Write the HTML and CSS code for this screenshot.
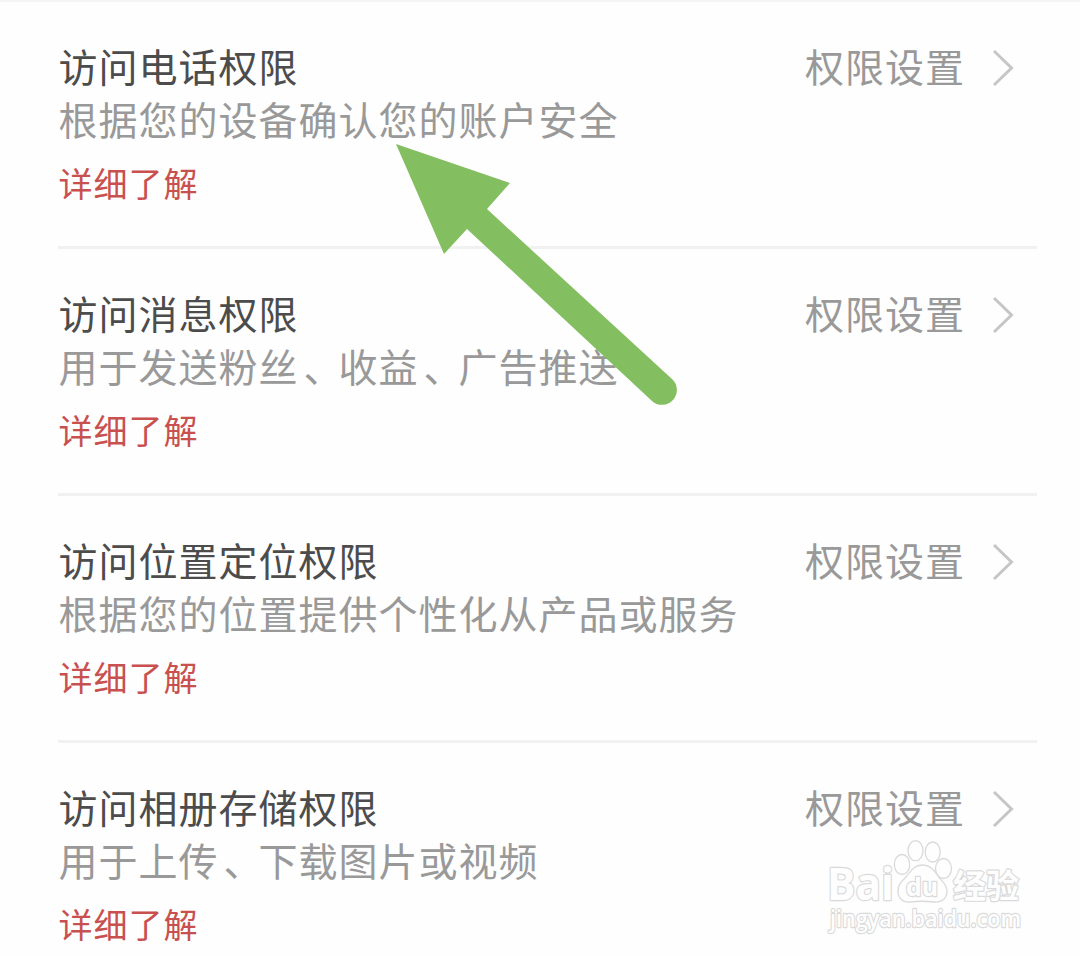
FILE: index.html
```html
<!DOCTYPE html>
<html lang="zh-CN">
<head>
    <meta charset="UTF-8">
    <meta name="viewport" content="width=device-width, initial-scale=1.0">
    <title>权限设置</title>
    <link rel="stylesheet" href="styles.css">
</head>
<body>

<div class="list">
    <div class="item">
        <div class="info">
            <div class="title">访问电话权限</div>
            <div class="desc">根据您的设备确认您的账户安全</div>
            <a class="more">详细了解</a>
        </div>
        <div class="setting">
            <span>权限设置</span>
            <svg class="chevron" viewBox="0 0 24 40"><path d="M3 3L20.5 20L3 37"/></svg>
        </div>
    </div>
    <div class="item">
        <div class="info">
            <div class="title">访问消息权限</div>
            <div class="desc">用于发送粉丝<span class="comma">、</span>收益<span class="comma">、</span>广告推送</div>
            <a class="more">详细了解</a>
        </div>
        <div class="setting">
            <span>权限设置</span>
            <svg class="chevron" viewBox="0 0 24 40"><path d="M3 3L20.5 20L3 37"/></svg>
        </div>
    </div>
    <div class="item">
        <div class="info">
            <div class="title">访问位置定位权限</div>
            <div class="desc">根据您的位置提供个性化从产品或服务</div>
            <a class="more">详细了解</a>
        </div>
        <div class="setting">
            <span>权限设置</span>
            <svg class="chevron" viewBox="0 0 24 40"><path d="M3 3L20.5 20L3 37"/></svg>
        </div>
    </div>
    <div class="item">
        <div class="info">
            <div class="title">访问相册存储权限</div>
            <div class="desc">用于上传<span class="comma">、</span>下载图片或视频</div>
            <a class="more">详细了解</a>
        </div>
        <div class="setting">
            <span>权限设置</span>
            <svg class="chevron" viewBox="0 0 24 40"><path d="M3 3L20.5 20L3 37"/></svg>
        </div>
    </div>
</div>

<!-- arrow over the list -->
<svg class="arrow" viewBox="0 0 290 270">
    <path d="M6 5L120 44L97 70L282 240A14.3 14.3 0 0 1 262 262L77 90L54 115Z"/>
</svg>

<!-- watermark -->
<svg class="watermark" viewBox="0 0 210 110">
    <g class="wm-paw">
        <ellipse cx="82" cy="31.5" rx="7.7" ry="10"/>
        <ellipse cx="95.5" cy="17.7" rx="7.5" ry="10"/>
        <ellipse cx="112.7" cy="19" rx="7.5" ry="10"/>
        <ellipse cx="123.5" cy="35.5" rx="8" ry="10"/>
        <path d="M102 32C94 32 91 38 86 44C81 49 78 52 78 58C78 65 83 70 90 69C98 68 106 68 114 69C122 70 127 65 127 58C127 51 122 49 118 43C114 37 110 32 102 32Z"/>
    </g>
    <text class="wm-logo" x="7" y="67" textLength="67" lengthAdjust="spacingAndGlyphs">Bai</text>
    <text class="wm-du" x="86" y="63" textLength="32" lengthAdjust="spacingAndGlyphs">du</text>
    <text class="wm-cn" x="133" y="65" textLength="66" lengthAdjust="spacingAndGlyphs">经验</text>
    <text class="wm-url" x="10" y="94" textLength="191" lengthAdjust="spacingAndGlyphs">jingyan.baidu.com</text>
</svg>

</body>
</html>
```
FILE: styles.css
```css
body {
    margin: 0;
    height: 956px;
    overflow: hidden;
    position: relative;
    box-sizing: border-box;
    border-top: 2px solid #f5f5f5;
    background-color: #fefefe;
    font-family: "Noto Sans CJK SC", sans-serif;
}

/* Permission list */
.list {
    margin: 0 43px 0 58px;
}

.item {
    display: flex;
    justify-content: space-between;
    height: 247px;
    box-sizing: border-box;
    padding: 37px 22px 0 0.5px;
    border-bottom: 3px solid #f1f1f1;
}

.item:last-child {
    border-bottom: none;
}

.title,
.desc,
.setting {
    font-size: 39px;
    letter-spacing: 1px;
    line-height: 53px;
    white-space: nowrap;
}

.title {
    color: #4c4c4c;
}

.desc {
    color: #999;
}

.comma {
    margin: 0 -5px 0 5px;
}

.more {
    display: block;
    margin-top: 14px;
    font-size: 34px;
    letter-spacing: 1px;
    line-height: 48px;
    color: #c8504f;
}

.setting {
    display: flex;
    align-items: center;
    height: 53px;
    color: #999;
}

.chevron {
    width: 24px;
    height: 40px;
    margin: 4px 0 0 26px;
    fill: none;
    stroke: #c6c6c6;
    stroke-width: 3;
}

/* Arrow */
.arrow {
    position: absolute;
    left: 390px;
    top: 137px;
    width: 290px;
    height: 270px;
    fill: #83bf60;
}

/* Watermark */
.watermark {
    position: absolute;
    left: 820px;
    top: 831px;
    width: 210px;
    height: 110px;
    overflow: visible;
    fill: #fefefe;
    stroke: #dadada;
    stroke-width: 1.3;
}

.watermark text {
    paint-order: stroke;
    stroke-linejoin: round;
    stroke-width: 2.4;
}

.wm-logo,
.wm-du {
    font-family: "Open Sans", sans-serif;
    font-weight: bold;
}

.wm-logo {
    font-size: 44px;
}

.wm-du {
    font-size: 25px;
}

.wm-cn {
    font-size: 33px;
    font-weight: bold;
}

.wm-url {
    font-family: "Open Sans", sans-serif;
    font-size: 24px;
    font-weight: 600;
}
```
